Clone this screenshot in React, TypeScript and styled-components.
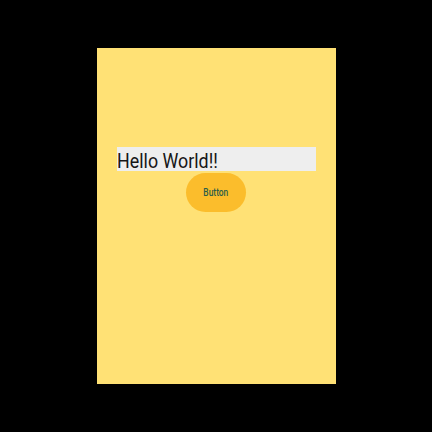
import styled, { createGlobalStyle } from "styled-components";

const GlobalStyle = createGlobalStyle`
  html, body {
    margin: 0;
    padding: 0;
    background: #000;
  }
  #root {
    width: 432px;
    height: 432px;
  }
`;

const Screen = styled.div`
  width: 432px;
  height: 432px;
  display: flex;
  align-items: center;
  justify-content: center;
  background: #000;
`;

const Panel = styled.div`
  width: 239px;
  height: 336px;
  background: #ffe175;
  display: flex;
  flex-direction: column;
  align-items: center;
  box-sizing: border-box;
  padding-top: 99px;
`;

const Label = styled.div`
  width: 199px;
  height: 22px;
  padding-top: 2px;
  align-self: flex-start;
  margin-left: 20px;
  background: #eeeeee;
  color: #161616;
  font-family: Roboto, "Liberation Sans", sans-serif;
  font-size: 21px;
  line-height: 24px;
  white-space: nowrap;
  overflow: visible;
`;

// the screen in the capture is squeezed horizontally, so is its text
const Narrow = styled.span<{ $scale: number }>`
  display: inline-block;
  transform: scaleX(${({ $scale }) => $scale});
  transform-origin: ${({ $scale }) => ($scale < 1 ? "left center" : "center")};
`;

const ActionButton = styled.button`
  margin-top: 2px;
  width: 60px;
  height: 39px;
  border: none;
  border-radius: 20px;
  background: #fbbd2c;
  color: #2b5d48;
  font-family: Roboto, "Liberation Sans", sans-serif;
  font-size: 10px;
  font-weight: 500;
  padding: 0;
  cursor: pointer;
  display: flex;
  align-items: center;
  justify-content: center;
`;

const ButtonText = styled.span`
  display: inline-block;
  transform: scaleX(0.84);
`;

const App = () => {
  return (
    <>
      <GlobalStyle />
      <Screen>
        <Panel>
          <Label>
            <Narrow $scale={0.85}>Hello World!!</Narrow>
          </Label>
          <ActionButton>
            <ButtonText>Button</ButtonText>
          </ActionButton>
        </Panel>
      </Screen>
    </>
  );
};

export default App;
